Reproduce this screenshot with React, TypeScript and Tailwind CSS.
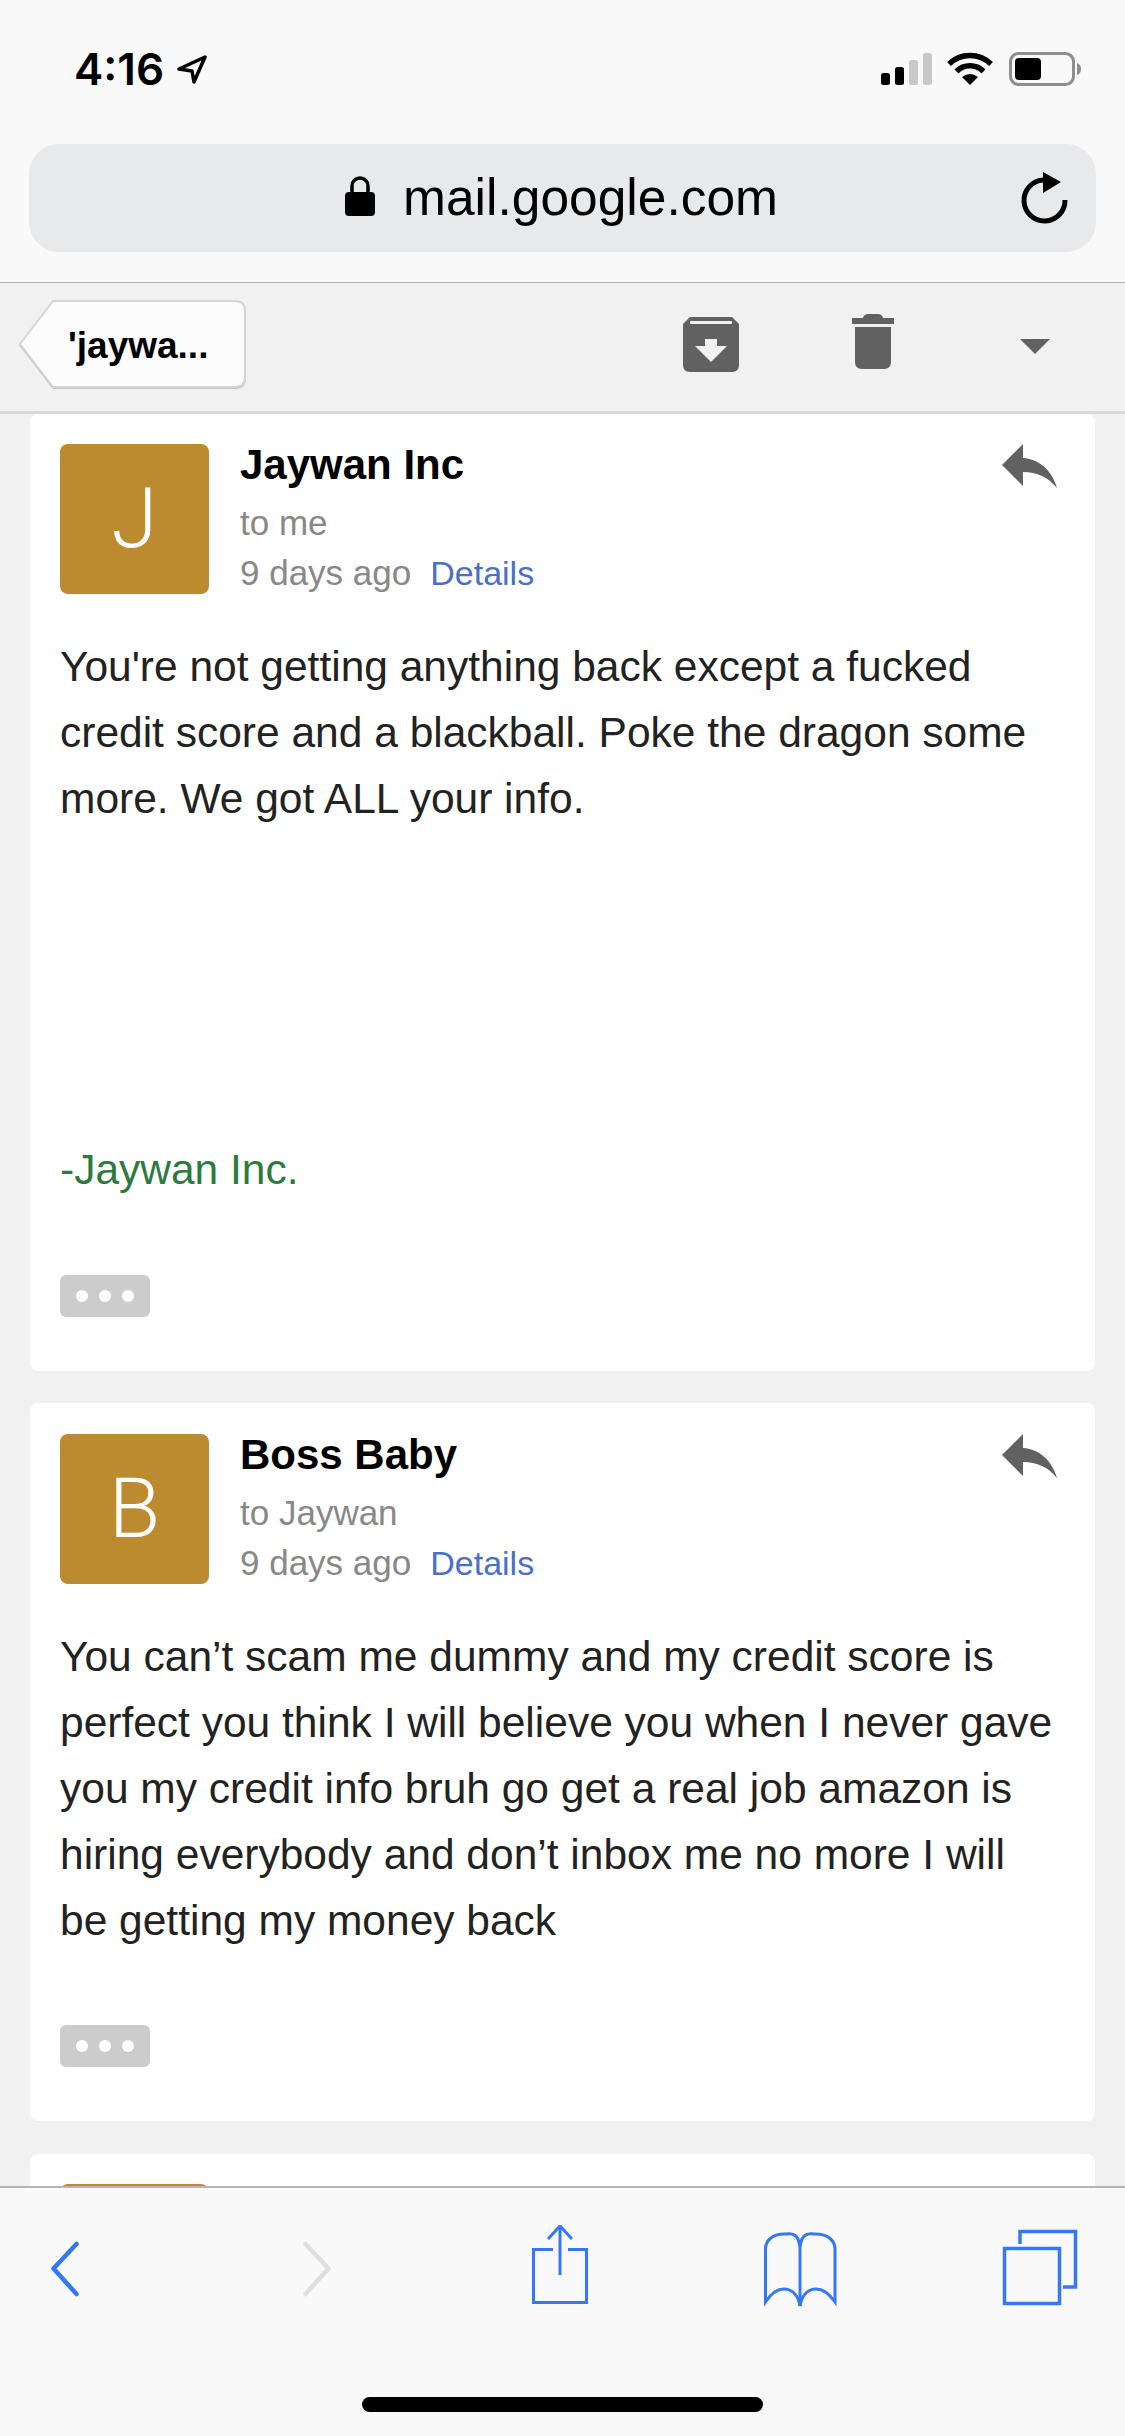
import React from "react";

const Blue = "#3478f6";

function Header({ letter, name, to }: { letter: string; name: string; to: string }) {
  return (
    <div className="flex items-start">
      <div className="w-[149px] h-[150px] rounded-[8px] bg-[#bd8b2f] flex items-center justify-center text-white font-['Roboto',sans-serif] font-light text-[84px] leading-none">
        {letter}
      </div>
      <div className="ml-[31px] -mt-[4px] flex-1">
        <div className="h-[50px] leading-[50px] text-[42px] font-bold text-black">{name}</div>
        <div className="mt-[8px] h-[50px] leading-[50px] text-[35px] text-[#888888]">{to}</div>
        <div className="h-[50px] leading-[50px] text-[35px] text-[#888888] flex">
          <span>9 days ago</span>
          <span className="ml-[19px] text-[#4a6fc9] text-[34px]">Details</span>
        </div>
      </div>
      <svg width="55" height="44" viewBox="0 0 55 44" className="mr-[38px]" fill="#616161">
        <path d="M0 21 L21 0 L21 14 C38 15 50 27 55 44 C46 33 35 28 21 28 L21 42 Z" />
      </svg>
    </div>
  );
}

function More({ className }: { className: string }) {
  return (
    <div className={`w-[90px] h-[42px] rounded-[6px] bg-[#cccccc] flex items-center justify-center gap-[11px] ${className}`}>
      <div className="w-[12px] h-[12px] rounded-full bg-white" />
      <div className="w-[12px] h-[12px] rounded-full bg-white" />
      <div className="w-[12px] h-[12px] rounded-full bg-white" />
    </div>
  );
}

export default function App() {
  return (
    <div className="w-[1125px] h-[2436px] overflow-hidden flex flex-col bg-[#f1f1f1] font-['Liberation_Sans',Arial,sans-serif]">
      {/* Browser top */}
      <div className="h-[283px] shrink-0 bg-[#f9f9f9] border-b border-[#b2b2b2]">
        <div className="flex items-center h-[34px] mt-[52px] pl-[74px]">
          <span className="font-['Inter',sans-serif] font-semibold text-[44px] leading-none text-black">4:16</span>
          <svg width="30" height="30" viewBox="0 0 30 30" className="ml-[13px]" fill="none" stroke="#000" strokeWidth="3.5" strokeLinejoin="round">
            <path d="M28 3 L2 15 L15 17 L17 28 Z" />
          </svg>
          <svg width="51" height="32" viewBox="0 0 51 32" className="ml-[674px]">
            <rect x="0" y="20" width="9" height="12" rx="2.5" fill="#000" />
            <rect x="14" y="14" width="9" height="18" rx="2.5" fill="#000" />
            <rect x="28" y="7" width="9" height="25" rx="2.5" fill="#c8c8c8" />
            <rect x="42" y="0" width="9" height="32" rx="2.5" fill="#c8c8c8" />
          </svg>
          <svg width="46" height="34" viewBox="0 0 46 34" className="ml-[15px]" fill="none" stroke="#000" strokeWidth="5.5">
            <path d="M2 12 A30 30 0 0 1 44 12" />
            <path d="M9.5 19.5 A19 19 0 0 1 36.5 19.5" />
            <path d="M23 33 L15 25 Q23 19 31 25 Z" fill="#000" stroke="none" />
          </svg>
          <svg width="72" height="34" viewBox="0 0 72 34" className="ml-[16px]">
            <rect x="1.5" y="1.5" width="63" height="31" rx="8" fill="none" stroke="#8e8e8e" strokeWidth="3" />
            <rect x="6" y="6" width="26" height="22" rx="4" fill="#000" />
            <path d="M68 11 C71 12 72 14 72 17 C72 20 71 22 68 23 Z" fill="#8e8e8e" />
          </svg>
        </div>
        <div className="relative mt-[58px] mx-[29px] h-[108px] rounded-[30px] bg-[#e8e9eb] flex items-center justify-center">
          <svg width="30" height="40" viewBox="0 0 30 40" className="mr-[28px] ml-[-2px] mt-[-4px]">
            <path d="M7 17 V10 A8 8 0 0 1 23 10 V17" fill="none" stroke="#000" strokeWidth="3.5" />
            <rect x="0" y="16" width="30" height="24" rx="4" fill="#000" />
          </svg>
          <span className="text-[51.5px] leading-none text-black">mail.google.com</span>
          <svg width="50" height="55" viewBox="0 0 50 55" className="absolute right-[26px] top-[26px]" fill="none">
            <path d="M23 10 A20.5 20.5 0 1 0 45 30" stroke="#000" strokeWidth="5" />
            <path d="M23 2 L41 12 L23 23 Z" fill="#000" />
          </svg>
        </div>
      </div>

      {/* Gmail toolbar */}
      <div className="h-[131px] shrink-0 bg-[#f1f1f1] border-b-[3px] border-[#d8d8d8] flex items-start">
        <div className="relative ml-[18px] mt-[17px] w-[229px] h-[90px] flex items-center">
          <svg width="229" height="90" viewBox="0 0 229 90" className="absolute inset-0 drop-shadow-[0_1px_0_#c4c4c4]">
            <path d="M35 1 H217 Q227 1 227 11 V77 Q227 87 217 87 H35 L2 44 Z" fill="#fcfcfc" stroke="#d4d4d4" strokeWidth="2" strokeLinejoin="round" />
          </svg>
          <span className="relative ml-[50px] text-[37px] font-bold text-black whitespace-nowrap leading-none">'jaywa...</span>
        </div>
        <svg width="56" height="55" viewBox="0 0 56 55" className="ml-[436px] mt-[34px]">
          <path d="M7 0 H49 L56 7 V48 Q56 55 49 55 H7 Q0 55 0 48 V7 Z" fill="#616161" />
          <rect x="7" y="4" width="42" height="3" rx="1" fill="#f1f1f1" />
          <path d="M22 22 H34 V29 H44 L28 45 L12 29 H22 Z" fill="#f1f1f1" />
        </svg>
        <svg width="42" height="55" viewBox="0 0 42 55" className="ml-[113px] mt-[31px]" fill="#616161">
          <path d="M0 4 H11 Q12 0 16 0 H26 Q30 0 31 4 H42 V10 H0 Z" />
          <path d="M3 13 H39 V48 Q39 55 32 55 H10 Q3 55 3 48 Z" />
        </svg>
        <svg width="30" height="15" viewBox="0 0 30 15" className="ml-[126px] mt-[56px]" fill="#616161">
          <path d="M0 0 H30 L15 15 Z" />
        </svg>
      </div>

      {/* Messages */}
      <div className="flex-1 overflow-hidden px-[30px] flex flex-col">
        <div className="bg-white rounded-[8px] pl-[30px] pt-[30px] shrink-0 h-[957px]">
          <Header letter="J" name="Jaywan Inc" to="to me" />
          <p className="mt-[36px] text-[42.5px] leading-[66px] text-[#222222] whitespace-nowrap">
            You're not getting anything back except a fucked<br />
            credit score and a blackball. Poke the dragon some<br />
            more. We got ALL your info.
          </p>
          <p className="mt-[305px] text-[42.5px] leading-[66px] text-[#2d7a3e]">-Jaywan Inc.</p>
          <More className="mt-[72px]" />
        </div>
        <div className="bg-white rounded-[8px] pl-[30px] pt-[31px] mt-[32px] shrink-0 h-[718px]">
          <Header letter="B" name="Boss Baby" to="to Jaywan" />
          <p className="mt-[36px] text-[42.5px] leading-[66px] text-[#222222] whitespace-nowrap">
            You can’t scam me dummy and my credit score is<br />
            perfect you think I will believe you when I never gave<br />
            you my credit info bruh go get a real job amazon is<br />
            hiring everybody and don’t inbox me no more I will<br />
            be getting my money back
          </p>
          <More className="mt-[71px]" />
        </div>
        <div className="bg-white rounded-[8px] pl-[30px] pt-[30px] mt-[33px] shrink-0 h-[300px]">
          <div className="w-[149px] h-[150px] rounded-[8px] bg-[#bd8b2f]" />
        </div>
      </div>

      {/* Browser bottom */}
      <div className="h-[250px] shrink-0 bg-[#f9f9f9] border-t-2 border-[#b5b5b5]">
        <div className="flex items-start h-[85px] mt-[37px] pl-[48px]">
          <svg width="34" height="85" viewBox="0 0 34 85" fill="none" stroke={Blue} strokeWidth="4.5" strokeLinecap="round" strokeLinejoin="round">
            <path d="M28.5 19 L5.5 43.5 L28.5 69" />
          </svg>
          <svg width="34" height="85" viewBox="0 0 34 85" className="ml-[218px]" fill="none" stroke="#dfdfdf" strokeWidth="4.5" strokeLinecap="round" strokeLinejoin="round">
            <path d="M5.5 19 L28.5 43.5 L5.5 69" />
          </svg>
          <svg width="64" height="85" viewBox="0 0 64 85" className="ml-[194px]" fill="none" stroke={Blue} strokeWidth="3">
            <path d="M25 24.5 H5.5 V77.5 H58.5 V24.5 H40" />
            <path d="M32 2 V50" />
            <path d="M20 14 L32 1 L44 14" />
          </svg>
          <svg width="80" height="85" viewBox="0 0 80 85" className="ml-[168px]" fill="none" stroke={Blue} strokeWidth="3">
            <path d="M40 22 C38 6 30 9 24 9 C12 9 5.5 16 5.5 24 V77 C12 67 18 64 24 64 C32 64 38 70 40 81 C42 70 48 64 56 64 C62 64 68 67 75 77 V24 C75 16 68 9 56 9 C50 9 42 6 40 22 Z" />
            <path d="M40 22 V81" />
          </svg>
          <svg width="80" height="85" viewBox="0 0 80 85" className="ml-[160px]" fill="none" stroke={Blue} strokeWidth="3.5">
            <rect x="4.5" y="23.5" width="55" height="55" />
            <path d="M20 19 V6.5 H75.5 V62 H63" />
          </svg>
        </div>
        <div className="ml-[362px] mt-[87px] w-[401px] h-[15px] rounded-full bg-black" />
      </div>
    </div>
  );
}
